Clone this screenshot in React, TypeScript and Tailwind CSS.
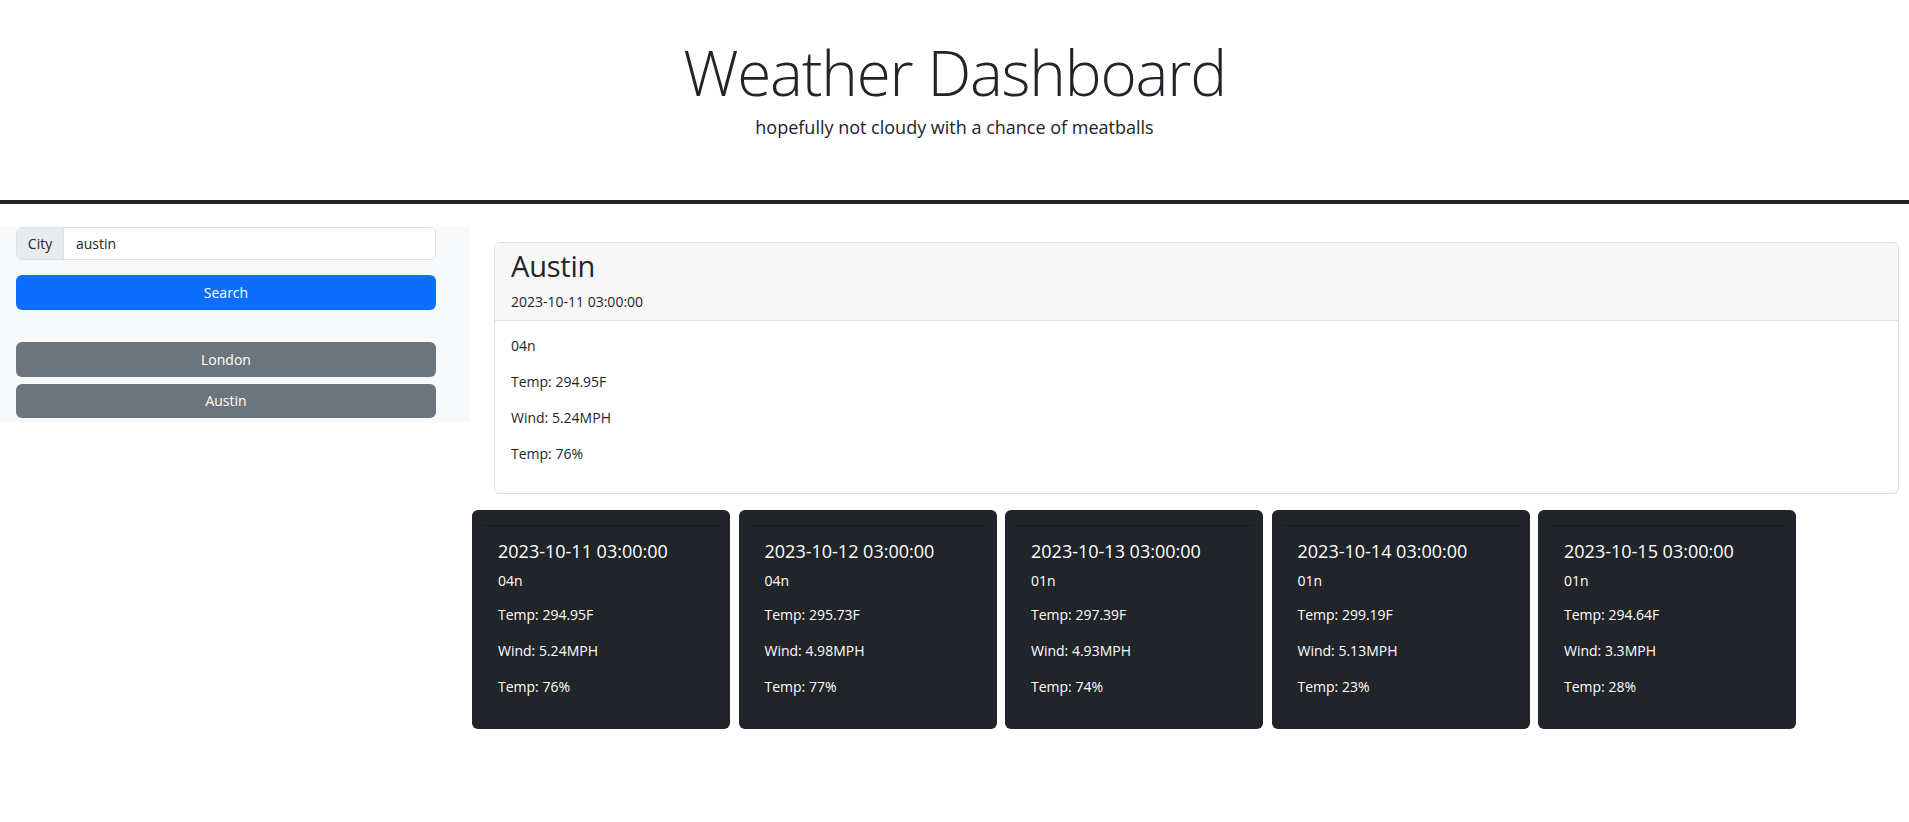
import React from 'react';

const FORECAST = [
  { date: '2023-10-11 03:00:00', icon: '04n', temp: '294.95F', wind: '5.24MPH', humidity: '76%' },
  { date: '2023-10-12 03:00:00', icon: '04n', temp: '295.73F', wind: '4.98MPH', humidity: '77%' },
  { date: '2023-10-13 03:00:00', icon: '01n', temp: '297.39F', wind: '4.93MPH', humidity: '74%' },
  { date: '2023-10-14 03:00:00', icon: '01n', temp: '299.19F', wind: '5.13MPH', humidity: '23%' },
  { date: '2023-10-15 03:00:00', icon: '01n', temp: '294.64F', wind: '3.3MPH', humidity: '28%' },
];

const HISTORY = ['London', 'Austin'];

export default function App() {
  return (
    <div className="min-h-screen bg-white text-[#212529] font-['Open_Sans',sans-serif]">
      {/* Header */}
      <header className="text-center pt-[34px] pb-[59.5px]">
        <h1 className="text-[62px] leading-[77px] font-light tracking-[-1.2px]">Weather Dashboard</h1>
        <p className="mt-[4px] text-[18px] leading-[25.5px]">hopefully not cloudy with a chance of meatballs</p>
      </header>
      <div className="h-[4px] bg-[#212529]" />

      <div className="flex items-start pt-[23px]">
        {/* Search sidebar */}
        <aside className="w-[469px] shrink-0 bg-[#f8f9fa] pl-4 pr-[33px] pb-[4px]">
          <div className="flex h-[33px] border border-[#dee2e6] rounded-[6px] overflow-hidden text-[14px]">
            <span className="w-[47px] flex items-center justify-center bg-[#e9ecef] border-r border-[#dee2e6]">City</span>
            <input
              className="flex-1 min-w-0 bg-white pl-[12px] outline-none text-[#212529]"
              defaultValue="austin"
            />
          </div>
          <button className="mt-[15px] w-full h-[35px] rounded-[6px] bg-[#0d6efd] text-white text-[14px]">
            Search
          </button>
          <div className="mt-[32px] flex flex-col gap-[7px]">
            {HISTORY.map((city) => (
              <button key={city} className="w-full h-[34.5px] rounded-[6px] bg-[#6c757d] text-white text-[14px]">
                {city}
              </button>
            ))}
          </div>
        </aside>

        <main className="flex-1 min-w-0">
          {/* Current weather */}
          <div className="ml-[25px] mr-[10px] mt-[15px] border border-[#dfdfdf] rounded-[6px] overflow-hidden">
            <div className="bg-[#f7f7f7] border-b border-[#dfdfdf] px-4 pt-[5px] pb-[8px]">
              <h2 className="text-[29px] leading-[36px] tracking-[-0.2px]">Austin</h2>
              <div className="mt-[7px] text-[14px] leading-[21px]">2023-10-11 03:00:00</div>
            </div>
            <div className="px-4 pt-[15px] pb-[13px] text-[14px] leading-[20px]">
              <p className="mb-4">04n</p>
              <p className="mb-4">Temp: 294.95F</p>
              <p className="mb-4">Wind: 5.24MPH</p>
              <p className="mb-4">Temp: 76%</p>
            </div>
          </div>

          {/* 5 day forecast */}
          <div className="mt-[16px] ml-[3px] flex gap-[8.5px]">
            {FORECAST.map((day) => (
              <div key={day.date} className="w-[258px] shrink-0 bg-[#212529] text-white rounded-[6px] px-[11px] pt-[15px] pb-[32px]">
                <div className="h-px bg-black/25" />
                <div className="px-[15px]">
                  <h5 className="mt-[14.5px] text-[18px] leading-[21.6px]">{day.date}</h5>
                  <p className="mt-[8.5px] text-[14px] leading-[20px]">{day.icon}</p>
                  <p className="mt-[14.5px] text-[14px] leading-[20px]">Temp: {day.temp}</p>
                  <p className="mt-[16px] text-[14px] leading-[20px]">Wind: {day.wind}</p>
                  <p className="mt-[16px] text-[14px] leading-[20px]">Temp: {day.humidity}</p>
                </div>
              </div>
            ))}
          </div>
        </main>
      </div>
    </div>
  );
}
